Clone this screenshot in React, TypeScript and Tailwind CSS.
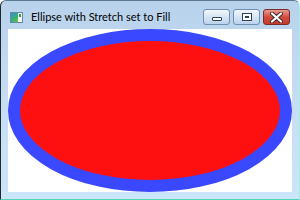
export default function App() {
  return (
    <div className="w-[300px] h-[200px] overflow-hidden bg-white">
      <div className="w-[300px] h-[200px] flex flex-col rounded-t-[6px] border-l border-l-[#1c2a30] border-r border-r-[#a6eee6] border-b border-b-[#4fd6b0] border-t border-t-[#5a7a94] bg-gradient-to-b from-[#b9d2ec] via-[#c6def4] to-[#cbe6f8]">
        {/* title bar */}
        <div className="h-[28px] flex items-start pl-[9px] pr-[9px] shrink-0">
          <div className="mt-[11px] w-[13px] h-[11px] border border-[#5c8aa8] bg-gradient-to-br from-[#3b8fd0] via-[#3fb06a] to-[#8ad04a] flex justify-end">
            <div className="w-[4px] h-full bg-white/90 flex flex-col items-center pt-[1px]">
              <div className="w-[2px] h-[3px] bg-[#3a9a4a]" />
            </div>
          </div>
          <div
            className="ml-[8px] mt-[9px] text-[11px] leading-[14px] text-black whitespace-nowrap"
            style={{ fontFamily: 'Lato, "Noto Sans", sans-serif' }}
          >
            Ellipse with Stretch set to Fill
          </div>
          <div className="ml-auto mt-[8px] flex gap-[3px]">
            <div className="w-[27px] h-[16px] rounded-[3px] border border-[#6f8fb3] bg-gradient-to-b from-[#f2f7fc] via-[#d6e5f4] to-[#bcd3ec] flex items-center justify-center">
              <div className="mt-[4px] w-[10px] h-[4px] border border-[#2c3f58] bg-white rounded-[1px]" />
            </div>
            <div className="w-[27px] h-[16px] rounded-[3px] border border-[#6f8fb3] bg-gradient-to-b from-[#f2f7fc] via-[#d6e5f4] to-[#bcd3ec] flex items-center justify-center">
              <div className="w-[10px] h-[8px] border border-[#2c3f58] bg-white flex items-center justify-center">
                <div className="w-[4px] h-[2px] border border-[#2c3f58]" />
              </div>
            </div>
            <div className="w-[27px] h-[16px] rounded-[3px] border border-[#7a2a2a] bg-gradient-to-b from-[#e99a8e] via-[#d24c3e] to-[#c63a2c] flex items-center justify-center">
              <svg width="13" height="11" viewBox="0 0 13 11">
                <path d="M2 1.5 L11 9.5 M11 1.5 L2 9.5" stroke="#3a2a2a" strokeWidth="4" strokeLinecap="round" />
                <path d="M2 1.5 L11 9.5 M11 1.5 L2 9.5" stroke="#ffffff" strokeWidth="2.2" strokeLinecap="round" />
              </svg>
            </div>
          </div>
        </div>
        {/* client area */}
        <div className="flex-1 flex px-[7px] pb-[7px]">
          <div className="flex-1 bg-white">
            <svg width="284" height="163" viewBox="0 0 284 163" className="block">
              <ellipse cx="142" cy="81.5" rx="136" ry="75.5" fill="#ff1010" stroke="#3a48ff" strokeWidth="12" />
            </svg>
          </div>
        </div>
      </div>
    </div>
  );
}
